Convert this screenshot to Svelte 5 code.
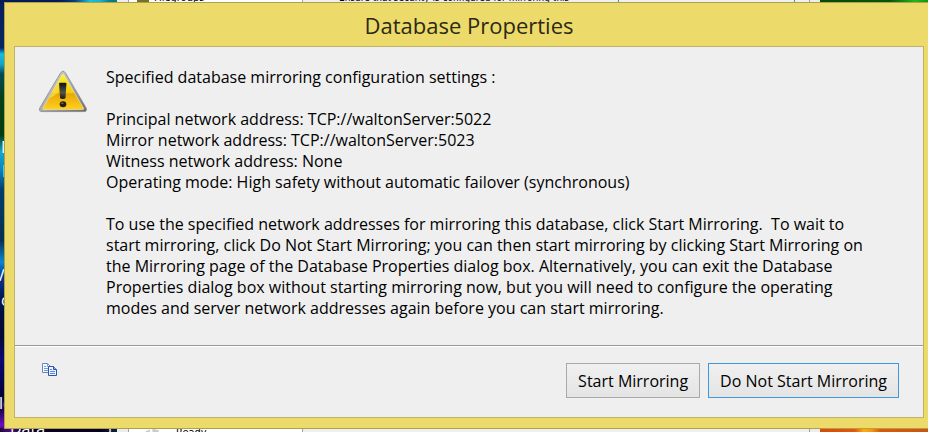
<script>
  const summary = [
    ['Principal network address', 'TCP://waltonServer:5022'],
    ['Mirror network address', 'TCP://waltonServer:5023'],
    ['Witness network address', 'None'],
    ['Operating mode', 'High safety without automatic failover (synchronous)']
  ];
</script>

<main class="desktop">
  <div class="behind" aria-hidden="true">
    <span class="label n">N</span>
    <span class="label i">I</span>
    <span class="label v">V</span>
    <span class="label c">c</span>
    <span class="label l">lc</span>
    <span class="label data">Data</span>
    <span class="label drive">17</span>
    <div class="parent">
      <div class="pages">
        <span class="page-icon"></span>
        <span class="page">Filegroups</span>
        <span class="spinner"></span>
        <span class="ready">Ready</span>
      </div>
      <div class="settings">
        <span class="hint">Ensure that security is configured for mirroring this</span>
        <span class="configure"></span>
      </div>
    </div>
  </div>

  <div class="dialog" role="dialog" aria-labelledby="title">
    <h1 id="title">Database Properties</h1>
    <div class="client">
      <div class="message">
        <svg class="warning" viewBox="0 0 50 44" aria-label="Warning" role="img">
          <defs>
            <linearGradient id="edge" x1="0" y1="0" x2="1" y2="1">
              <stop offset="0" stop-color="#d9d9d9" />
              <stop offset="0.5" stop-color="#a9acae" />
              <stop offset="1" stop-color="#6c6c6c" />
            </linearGradient>
            <linearGradient id="fill" x1="0" y1="0" x2="0" y2="1">
              <stop offset="0" stop-color="#fff32a" />
              <stop offset="0.52" stop-color="#f4cd10" />
              <stop offset="0.56" stop-color="#e9a808" />
              <stop offset="1" stop-color="#ffd11c" />
            </linearGradient>
            <linearGradient id="shine" x1="0" y1="0" x2="1" y2="0">
              <stop offset="0" stop-color="#fffb90" stop-opacity="0.7" />
              <stop offset="1" stop-color="#ffe000" stop-opacity="0" />
            </linearGradient>
            <linearGradient id="mark" x1="0" y1="0" x2="0" y2="1">
              <stop offset="0" stop-color="#0c1014" />
              <stop offset="0.6" stop-color="#56534a" />
              <stop offset="1" stop-color="#16150c" />
            </linearGradient>
          </defs>
          <path d="M3 42.5H48L47 40z" fill="#999" opacity="0.5" />
          <path d="M22 2.5Q24.500 -1 27 2.5L48 38Q49.500 42 46 42H3Q-1 42 1 38Z" fill="url(#edge)" stroke="#858789" stroke-width="0.8" />
          <path d="M23.500 4.5Q24.500 2.8 25.500 4.5L45.500 38.5Q46 39.8 44.500 39.8H5Q3.500 39.8 4 38.5Z" fill="url(#fill)" stroke="#eee6b8" stroke-width="0.7" />
          <path d="M24.500 4.500 11 28Q20 23 24.500 22Z" fill="url(#shine)" />
          <path d="M20.500 13.500Q20.500 12.500 21.500 12.500H27Q28 12.500 28 13.500L27 28.500Q24.500 30 21.500 28.500Z" fill="url(#mark)" />
          <ellipse cx="24.500" cy="34.500" rx="3.400" ry="3" fill="#24200f" />
          <ellipse cx="23.800" cy="33.500" rx="1.300" ry="0.800" fill="#77705a" />
        </svg>
        <div class="text">
          <p>Specified database mirroring configuration settings :</p>
          <ul>
            {#each summary as [name, value]}
              <li>{name}: {value}</li>
            {/each}
          </ul>
          <p>
            To use the specified network addresses for mirroring this database, click Start Mirroring.&nbsp; To wait to<br />
            start mirroring, click Do Not Start Mirroring; you can then start mirroring by clicking Start Mirroring on<br />
            the Mirroring page of the Database Properties dialog box. Alternatively, you can exit the Database<br />
            Properties dialog box without starting mirroring now, but you will need to configure the operating<br />
            modes and server network addresses again before you can start mirroring.
          </p>
        </div>
      </div>
      <footer>
        <button class="copy" aria-label="Copy message text">
          <svg viewBox="0 0 16 14">
            <path d="M0.500 0.500H5.500L8.500 3.500V9.500H0.500Z" fill="#f4f8ff" stroke="#7485b4" />
            <path d="M5.500 0.500V3.500H8.500M2 3.500H4M2 5.500H6M2 7.500H6" fill="none" stroke="#6fa0dc" />
            <path d="M6.500 3.500H11.500L14.500 6.500V12.500H6.500Z" fill="#eaf3ff" stroke="#3352a5" />
            <path d="M11.500 3.500V6.500H14.500" fill="#8db4ee" stroke="#3352a5" />
            <path d="M8 6.500H10M8 8.500H13M8 10.500H13" stroke="#4f8be0" />
          </svg>
        </button>
        <button class="action">Start Mirroring</button>
        <button class="action default">Do Not Start Mirroring</button>
      </footer>
    </div>
  </div>
</main>

<style>
  .desktop {
    position: relative;
    overflow: hidden;
    box-sizing: border-box;
    min-height: 100vh;
    padding: 2px 0 4px 4px;
    display: flex;
    background: #06123f;
    font-family: "Open Sans", "Noto Sans", sans-serif;
  }
  .behind {
    position: absolute;
    inset: 0;
    background:
      linear-gradient(90deg, #24063c, #4d0d87 10px, #08002c 25px, #060021 100px, #102040 117px, transparent 117px) 0 100% / 100% 5px no-repeat,
      linear-gradient(90deg, #071c57 0 60px, #0a3d7a 75px, #18c0e0 90px, #16b5d2 100px, #087c82 110px, #087c82 117px, transparent 117px) 0 0 / 100% 3px no-repeat,
      linear-gradient(90deg, transparent 820px, #054b05 820px, #075607 890px, #20b81c 915px, #159415) 0 0 / 100% 3px no-repeat,
      linear-gradient(90deg, transparent 820px, #d84a08 820px, #e4570a 855px, #ffad0c 864px, #f7960c 872px, #df5808 880px, #c95610) 0 100% / 100% 5px no-repeat,
      linear-gradient(#061f5b 0, #072661 48px, #19bce0 54px, #14a6c9 64px, #044a55 74px, #064018 100px, #053c12 135px, #13a7cc 152px, #0d83b4 170px, #043d70 190px, #06304f 240px, #0c86d0 262px, #073a9a 275px, #03134b 300px, #030a33 335px, #0a0a75 360px, #04023c 395px, #210252 410px, #6a0fbd 425px, #330673);
  }
  .label {
    position: absolute;
    color: #fff;
    font-size: 16px;
    line-height: 20px;
  }
  .n { left: 1px; top: 137px; }
  .i { left: 2px; top: 161px; }
  .v { left: -5px; top: 265px; }
  .c { left: 1px; top: 290px; }
  .l { left: -1px; top: 393px; }
  .data { left: 10px; top: 418px; }
  .drive { left: 105px; top: 418px; }
  .parent {
    position: absolute;
    inset: 0 auto 0 117px;
    width: 703px;
    box-sizing: border-box;
    padding: 0 10px 0 11px;
    display: flex;
    background: #ededed;
    color: #000;
    font: 11px/14px "DejaVu Sans Condensed", "DejaVu Sans", sans-serif;
    font-stretch: condensed;
  }
  .pages {
    position: relative;
    width: 173px;
    background: #fff;
    border: solid #a3a3a3;
    border-width: 0 1px;
  }
  .settings {
    position: relative;
    flex: 1;
    background: #eef1ee;
    border-right: 1px solid #9aa0a3;
    white-space: nowrap;
  }
  .pages span, .settings span { position: absolute; }
  .page { left: 25px; top: -9px; }
  .page-icon { left: 8px; top: 0; width: 12px; height: 2px; background: #77722a; }
  .ready { left: 47px; bottom: -7px; }
  .spinner {
    left: 12px;
    bottom: -20px;
    width: 18px;
    height: 18px;
    border: 3px dashed #ccc;
    border-radius: 50%;
  }
  .hint {
    left: 36px;
    top: -9px;
    font-size: 10px;
  }
  .configure {
    left: 315px;
    top: 0;
    width: 175px;
    height: 2px;
    border: solid #3f91d5;
    border-width: 0 1px;
  }
  .dialog {
    position: relative;
    flex: 1;
    display: flex;
    flex-direction: column;
    box-sizing: border-box;
    padding: 0 4px 10px 9px;
    background: #ecdb6b;
    border: solid #aea04d;
    border-width: 1px 0 1px 1px;
  }
  h1 {
    margin: 0;
    height: 43px;
    color: #2d2914;
    font-size: 22px;
    font-weight: 400;
    line-height: 45px;
    text-align: center;
  }
  .client {
    flex: 1;
    display: flex;
    flex-direction: column;
    border: 1px solid #beb168;
    background: #efefef;
  }
  .message {
    flex: 1;
    display: flex;
    gap: 18px;
    padding: 20px 24px 26px;
    border-bottom: 1px solid #969696;
  }
  .warning {
    flex: none;
    width: 49px;
    height: 44px;
    margin-top: 3px;
  }
  .text {
    color: #000;
    font-size: 16px;
    line-height: 21px;
    white-space: nowrap;
  }
  p { margin: 0; }
  ul {
    margin: 21px 0;
    padding: 0;
    list-style: none;
  }
  footer {
    display: flex;
    align-items: flex-start;
    gap: 8px;
    padding: 16px 24px 19px;
    border-top: 1px solid #fff;
  }
  button {
    box-sizing: border-box;
    font-family: inherit;
    color: #000;
  }
  .copy {
    margin: 0 auto 0 3px;
    padding: 0;
    border: 0;
    background: none;
  }
  .copy svg {
    display: block;
    width: 16px;
    height: 14px;
  }
  .action {
    height: 35px;
    padding: 0 11px;
    border: 1px solid #a9a9a9;
    background: linear-gradient(#f0f0f0, #e4e4e4);
    font-size: 16px;
    white-space: nowrap;
  }
  .action.default { border: 1px solid #3f97dc; }
</style>
